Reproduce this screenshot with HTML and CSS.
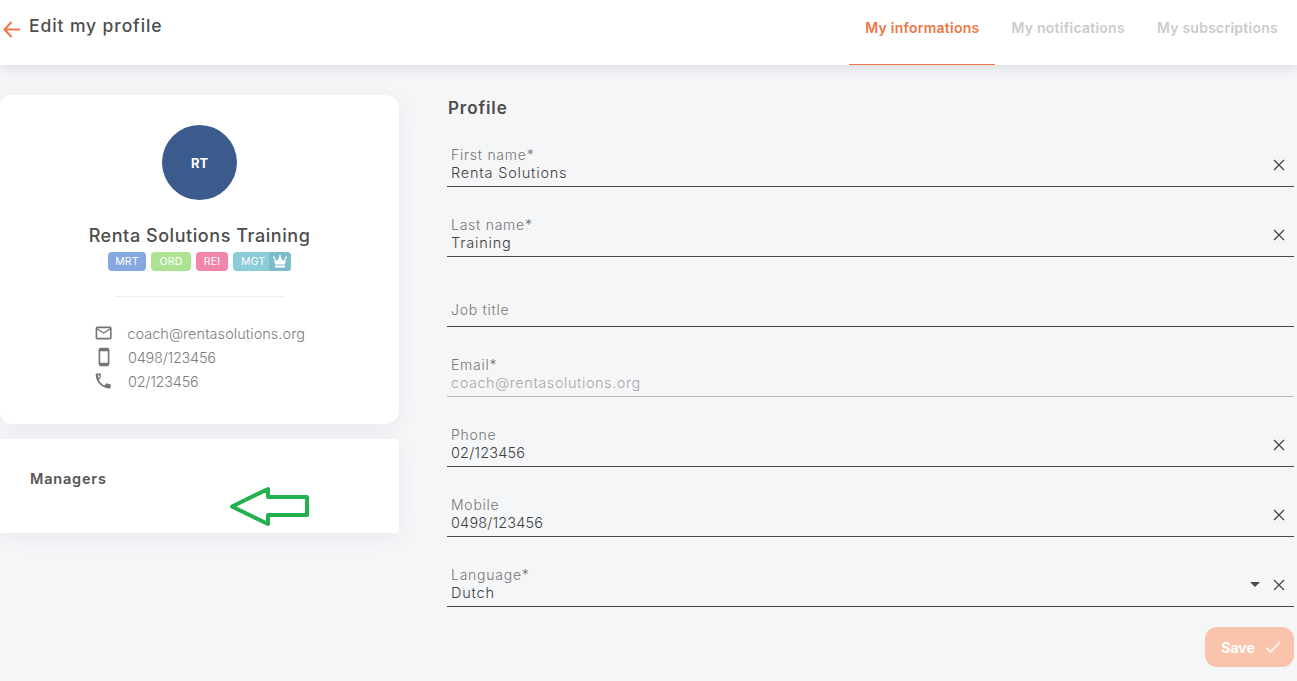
FILE: index.html
```html
<!DOCTYPE html>
<html lang="en">
<head>
<meta charset="utf-8">
<title>Edit my profile</title>
<link rel="stylesheet" href="styles.css">
</head>
<body>
<header class="topbar">
  <div class="title-wrap">
    <svg class="back" width="18" height="18" viewBox="0 0 18 18"><path d="M18 9.500H3M9.500 2L2.500 9.500 9.500 17" fill="none" stroke="#ee7546" stroke-width="2"/></svg>
    <h1 class="title">Edit my profile</h1>
  </div>
  <nav class="tabs">
    <a class="tab tab-active">My informations</a>
    <a class="tab">My notifications</a>
    <a class="tab">My subscriptions</a>
  </nav>
</header>
<main class="content">
  <aside class="side">
    <section class="card card-profile">
      <div class="avatar">RT</div>
      <h2 class="name">Renta Solutions Training</h2>
      <div class="badges">
        <span class="badge b-mrt">MRT</span>
        <span class="badge b-ord">ORD</span>
        <span class="badge b-rei">REI</span>
        <span class="badge b-mgt">MGT<span class="crown"><svg width="14" height="13" viewBox="0 0 14 13"><circle cx="7" cy="1" r="1" fill="#fff"/><circle cx="1" cy="2.500" r="1" fill="#fff"/><circle cx="13" cy="2.500" r="1" fill="#fff"/><path d="M1 3L4 6 7 1 10 6 13 3 12 9.500H2Z M2 10.500H12V12.500H2Z" fill="#fff"/></svg></span></span>
      </div>
      <hr class="divider">
      <ul class="contacts">
        <li class="contact"><svg width="20" height="20" viewBox="0 0 24 24"><path d="M20 4H4a2 2 0 0 0-2 2v12a2 2 0 0 0 2 2h16a2 2 0 0 0 2-2V6a2 2 0 0 0-2-2zm0 14H4V8l8 5 8-5v10zm-8-7L4 6h16l-8 5z" fill="#757575"/></svg><span>coach@rentasolutions.org</span></li>
        <li class="contact contact-num"><svg width="20" height="20" viewBox="0 0 24 24"><path d="M16 1H8a2.500 2.500 0 0 0-2.500 2.500v17A2.500 2.500 0 0 0 8 23h8a2.500 2.500 0 0 0 2.500-2.500v-17A2.500 2.500 0 0 0 16 1zm.5 18h-9V5h9v14z" fill="#757575"/></svg><span>0498/123456</span></li>
        <li class="contact contact-num"><svg width="20" height="20" viewBox="0 0 24 24"><path d="M6.540 5c.060.890.210 1.760.450 2.590l-1.200 1.200c-.410-1.200-.670-2.470-.760-3.790h1.510M3 3c-.550 0-1 .450-1 1 0 9.390 7.610 17 17 17 .550 0 1-.450 1-1v-3.490c0-.550-.450-1-1-1-1.240 0-2.450-.200-3.570-.570a.84.84 0 0 0-1.020.250l-2.200 2.200a15.070 15.070 0 0 1-6.590-6.590l2.200-2.200c.280-.280.360-.670.250-1.020A11.360 11.360 0 0 1 8.500 4c0-.550-.450-1-1-1H3z" fill="#757575"/></svg><span>02/123456</span></li>
      </ul>
    </section>
    <section class="card card-managers">
      <h3 class="managers">Managers</h3>
      <svg class="annot" width="82" height="42" viewBox="0 0 82 42"><path d="M4 20.500L40 3V11H79V29H40V38Z" fill="none" stroke="#22b14c" stroke-width="4" stroke-linejoin="round"/></svg>
    </section>
  </aside>
  <section class="form">
    <h2 class="form-title">Profile</h2>
    <div class="field"><div class="text"><label>First name*</label><div class="value">Renta Solutions</div></div><svg class="x" width="12" height="12" viewBox="0 0 12 12"><path d="M1 1L11 11M11 1L1 11" stroke="#4a4a4a" stroke-width="1.400"/></svg></div>
    <div class="field"><div class="text"><label>Last name*</label><div class="value">Training</div></div><svg class="x" width="12" height="12" viewBox="0 0 12 12"><path d="M1 1L11 11M11 1L1 11" stroke="#4a4a4a" stroke-width="1.400"/></svg></div>
    <div class="field field-empty"><div class="text"><label>Job title</label></div></div>
    <div class="field field-disabled"><div class="text"><label>Email*</label><div class="value value-email">coach@rentasolutions.org</div></div></div>
    <div class="field"><div class="text"><label>Phone</label><div class="value value-num">02/123456</div></div><svg class="x" width="12" height="12" viewBox="0 0 12 12"><path d="M1 1L11 11M11 1L1 11" stroke="#4a4a4a" stroke-width="1.400"/></svg></div>
    <div class="field"><div class="text"><label>Mobile</label><div class="value value-num">0498/123456</div></div><svg class="x" width="12" height="12" viewBox="0 0 12 12"><path d="M1 1L11 11M11 1L1 11" stroke="#4a4a4a" stroke-width="1.400"/></svg></div>
    <div class="field"><div class="text"><label>Language*</label><div class="value">Dutch</div></div><span class="caret"></span><svg class="x" width="12" height="12" viewBox="0 0 12 12"><path d="M1 1L11 11M11 1L1 11" stroke="#4a4a4a" stroke-width="1.400"/></svg></div>
    <div class="actions">
      <button class="save">Save<svg width="16" height="12" viewBox="0 0 16 12"><path d="M1 6.500L5.500 11 15 1" fill="none" stroke="#fff" stroke-width="1.500"/></svg></button>
    </div>
  </section>
</main>
</body>
</html>
```
FILE: styles.css
```css
* { box-sizing: border-box; }
html, body { margin: 0; height: 100%; }
body {
  height: 681px;
  overflow: hidden;
  background: #f5f6f8;
  color: #4a4a4a;
  font-family: "Inter", "Liberation Sans", sans-serif;
}
.topbar {
  height: 65px;
  background: #fff;
  display: flex;
  justify-content: space-between;
  box-shadow: 0 3px 12px rgba(60, 70, 90, 0.14);
  position: relative;
}
.title-wrap {
  display: flex;
  align-items: flex-start;
  padding: 15px 0 0 2px;
  gap: 9px;
}
.back { margin-top: 5px; }
.title {
  margin: 0;
  font-size: 17.500px;
  line-height: 21px;
  font-weight: 500;
  letter-spacing: 0.9px;
  color: #4d4d4d;
}
.tabs { display: flex; padding-right: 3px; }
.tab {
  height: 65px;
  padding: 19px 16px 0;
  font-size: 14px;
  line-height: 17px;
  font-weight: 600;
  letter-spacing: 0.25px;
  color: #cbcbcb;
}
.tab-active {
  color: #ee7546;
  border-bottom: 1px solid #ee7546;
}
.content {
  display: flex;
  padding-top: 30px;
  padding-right: 3px;
  gap: 48px;
}
.side { width: 399px; flex: none; }
.card {
  background: #fff;
  box-shadow: 0 4px 20px rgba(60, 70, 90, 0.07);
}
.card-profile {
  height: 329px;
  border-radius: 12px 14px 14px 12px;
  padding-top: 30px;
  display: flex;
  flex-direction: column;
  align-items: center;
}
.avatar {
  width: 75px;
  height: 75px;
  border-radius: 50%;
  background: #3a5b8c;
  color: #fff;
  font-size: 13px;
  font-weight: 700;
  display: flex;
  align-items: center;
  justify-content: center;
}
.name {
  margin: 25px 0 0;
  font-size: 18px;
  line-height: 22px;
  font-weight: 500;
  letter-spacing: 0.55px;
  color: #4d4d4d;
}
.badges {
  display: flex;
  gap: 5px;
  margin-top: 5px;
}
.badge {
  height: 19px;
  border-radius: 4px;
  font-size: 10.500px;
  line-height: 19px;
  letter-spacing: 0.2px;
  color: #fff;
  display: flex;
  overflow: hidden;
}
.b-mrt { background: #86a8e0; width: 38px; justify-content: center; }
.b-ord { background: #abe392; width: 40px; justify-content: center; }
.b-rei { background: #f285ab; width: 32px; justify-content: center; }
.b-mgt { background: #8ccbd8; width: 58px; padding-left: 8px; justify-content: space-between; }
.crown {
  width: 22px;
  background: #7fbcca;
  display: flex;
  align-items: center;
  justify-content: center;
}
.divider {
  width: 169px;
  border: 0;
  border-top: 1px solid #eeeff2;
  margin: 25px 0 0;
}
.contacts {
  list-style: none;
  margin: 24px 0 0;
  padding: 0;
  width: 211px;
}
.contact {
  display: flex;
  align-items: center;
  gap: 14px;
  height: 24px;
  font-size: 14.500px;
  font-weight: 300;
  letter-spacing: 0.05px;
  color: #7d7d7d;
}
.contact-num { letter-spacing: -0.25px; }
.card-managers {
  position: relative;
  height: 94px;
  margin-top: 15px;
  border-radius: 0 4px 4px 0;
  padding: 31px 30px 0;
}
.managers {
  margin: 0;
  font-size: 14.500px;
  line-height: 18px;
  font-weight: 600;
  letter-spacing: 0.8px;
  color: #555;
}
.annot {
  position: absolute;
  left: 228px;
  top: 47px;
}
.form { flex: 1; min-width: 0; }
.form-title {
  margin: 3px 0 0 1px;
  font-size: 17px;
  line-height: 21px;
  font-weight: 600;
  letter-spacing: 0.9px;
  color: #4d4d4d;
}
.field {
  height: 70px;
  display: flex;
  align-items: flex-end;
  border-bottom: 1px solid #4a4a4a;
  padding: 0 9px 4px 4px;
  gap: 13px;
}
.form-title + .field { height: 67px; margin-top: 1px; }
.text { flex: 1; min-width: 0; }
.text label {
  display: block;
  font-size: 14px;
  line-height: 18px;
  font-weight: 300;
  letter-spacing: 0.75px;
  color: #757575;
}
.value {
  font-size: 14.500px;
  line-height: 18px;
  font-weight: 300;
  color: #3f3f3f;
  letter-spacing: 0.8px;
}
.value-email { letter-spacing: 0.55px; }
.value-num { letter-spacing: 0.15px; }
.field-empty .text label { margin-bottom: 3px; }
.field-disabled { border-bottom-color: #b5b5b5; }
.field-disabled .value { color: #a8a8a8; }
.x { flex: none; margin-bottom: 11px; }
.caret {
  width: 0;
  height: 0;
  border-left: 5px solid transparent;
  border-right: 5px solid transparent;
  border-top: 5px solid #4a4a4a;
  margin-bottom: 15px;
}
.actions {
  display: flex;
  justify-content: flex-end;
  margin-top: 20px;
}
.save {
  width: 89px;
  height: 40px;
  border: 0;
  border-radius: 12px;
  padding: 0 0 0 3px;
  background: #f9c3ac;
  color: #fff;
  font-family: inherit;
  font-size: 14px;
  font-weight: 700;
  display: flex;
  align-items: center;
  justify-content: center;
  gap: 10px;
}
```
